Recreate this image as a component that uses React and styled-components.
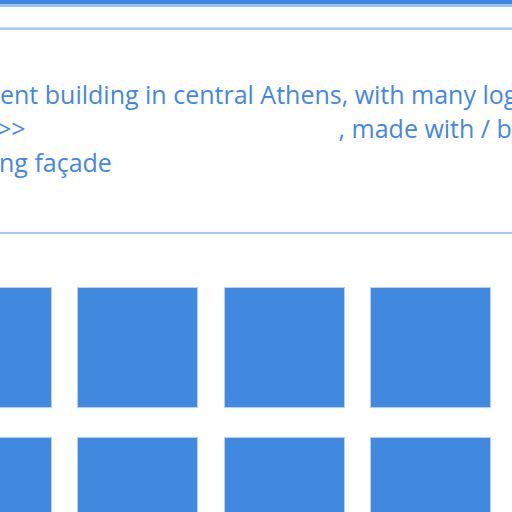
import React from "react";
import styled, { createGlobalStyle } from "styled-components";

const Global = createGlobalStyle`
  html, body {
    margin: 0;
    padding: 0;
    background: #ffffff;
    overflow: hidden;
  }
  body {
    font-family: "Open Sans", "DejaVu Sans", sans-serif;
  }
`;

const Page = styled.div`
  width: 512px;
  height: 512px;
  overflow: hidden;
  background: #fff;
`;

const TopBar = styled.div`
  height: 4px;
  background: #4186dd;
  border-bottom: 3px solid #9dc0ef;
`;

const Panel = styled.div`
  margin-top: 21px;
  border-top: 2px solid #a9c7f0;
  box-shadow: 0 -1px 0 #cfe0f7;
  border-bottom: 2px solid #abc8f1;
  padding: 47px 0 53px 0;
`;

const Line = styled.div`
  white-space: nowrap;
  font-size: 25px;
  line-height: 34px;
  color: #4587df;
  margin-left: ${(p) => p.$shift || 0}px;
`;

const Gap = styled.span`
  display: inline-block;
  width: ${(p) => p.$w}px;
`;

const Grid = styled.div`
  margin-top: 54px;
  margin-left: -68px;
  display: grid;
  grid-template-columns: repeat(4, 119px);
  column-gap: 27.3px;
  row-gap: 31px;
`;

const Tile = styled.div`
  height: 119px;
  background: #4188df;
  box-shadow: 0 0 0 1px rgba(120, 170, 235, 0.55);
`;

const App = () => {
  return (
    <Page>
      <Global />
      <TopBar />
      <Panel>
        <Line $shift={0}>ent building in central Athens, with many loggias</Line>
        <Line $shift={-3}>
          &gt;&gt;
          <Gap $w={313} />
          , made with / by
        </Line>
        <Line $shift={-1}>ng façade</Line>
      </Panel>
      <Grid>
        {Array.from({ length: 8 }).map((_, i) => (
          <Tile key={i} />
        ))}
      </Grid>
    </Page>
  );
};

export default App;
